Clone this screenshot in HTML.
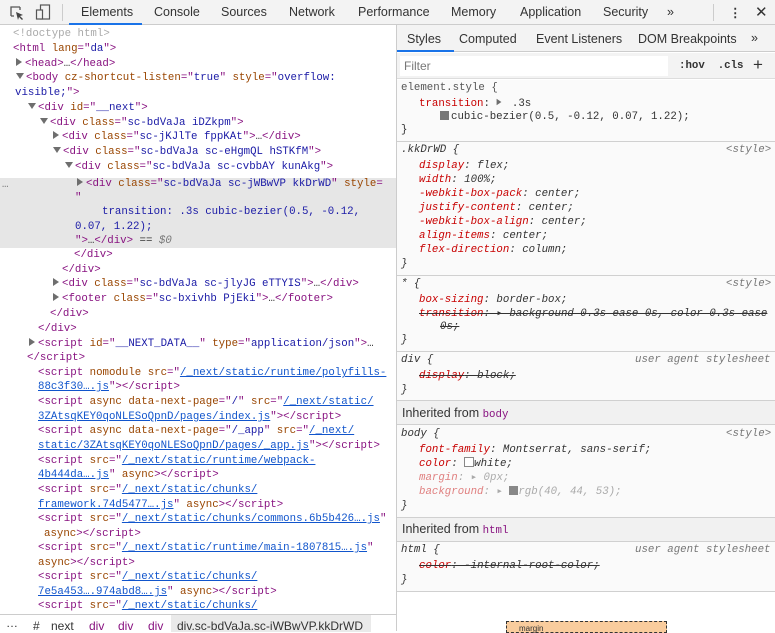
<!DOCTYPE html>
<html><head><meta charset="utf-8"><style>
*{margin:0;padding:0;box-sizing:border-box}
body{width:775px;height:631px;overflow:hidden;background:#fff;position:relative;font-family:"Liberation Sans",sans-serif;color:#333}
.m{font-family:"Liberation Mono","DejaVu Sans Mono",monospace;font-size:10.75px;white-space:pre;position:absolute;line-height:14px}
.t{color:#881280}.a{color:#994500}.v{color:#1a1aa6}.g{color:#aaa}.u{color:#1155cc;text-decoration:underline}
.tri{display:inline-block;width:0;height:0;border-left:6px solid #6e6e6e;border-top:4px solid transparent;border-bottom:4px solid transparent;margin-right:3px;vertical-align:0}
.dn{display:inline-block;width:0;height:0;border-top:6px solid #6e6e6e;border-left:4px solid transparent;border-right:4px solid transparent;margin-right:2px;vertical-align:1px}
.top{position:absolute;left:0;top:0;width:775px;height:25px;background:#f3f3f3;border-bottom:1px solid #ccc}
.tab{position:absolute;top:5px;font-size:12.5px;color:#333}
.p{color:#c80000}.i{font-style:italic}.s{text-decoration:line-through}
.sep{position:absolute;left:397px;width:378px;height:1px;background:#d0d0d0}
.r{position:absolute;left:397px;width:378px;background:#fafafa}
</style></head><body>
<div class="top">
<svg style="position:absolute;left:9px;top:5px" width="16" height="16" viewBox="0 0 16 16"><path d="M2 11V2h9" fill="none" stroke="#555" stroke-width="1.3"/><path d="M2 11h3M11 2v3" stroke="#555" stroke-width="1.3"/><path d="M7 7l7 3-3 1 3 3-1 1-3-3-1 3z" fill="#444"/></svg>
<svg style="position:absolute;left:35px;top:4px" width="16" height="17" viewBox="0 0 16 17"><rect x="5.5" y="1" width="9" height="14" fill="none" stroke="#555" stroke-width="1.2"/><rect x="1.5" y="6" width="6" height="9" fill="#f3f3f3" stroke="#555" stroke-width="1.2"/></svg>
<div style="position:absolute;left:62px;top:4px;width:1px;height:17px;background:#ccc"></div>
<div class="tab" style="left:81px;color:#333">Elements</div>
<div style="position:absolute;left:69px;top:23px;width:73px;height:2px;background:#1a73e8"></div>
<div class="tab" style="left:154px">Console</div>
<div class="tab" style="left:221px">Sources</div>
<div class="tab" style="left:289px">Network</div>
<div class="tab" style="left:358px">Performance</div>
<div class="tab" style="left:451px">Memory</div>
<div class="tab" style="left:520px">Application</div>
<div class="tab" style="left:603px">Security</div>
<div class="tab" style="left:667px">»</div>
<div style="position:absolute;left:713px;top:4px;width:1px;height:17px;background:#ccc"></div>
<div class="tab" style="left:729px;font-weight:bold">⋮</div>
<div class="tab" style="left:755px;font-size:15px;top:3px">✕</div>
</div>

<!-- elements -->
<div style="position:absolute;left:0;top:178px;width:396px;height:70px;background:#e6e6e6"></div>
<div class="m" style="left:2px;top:178px;color:#777">…</div>
<div class="m g" style="left:13px;top:27px">&lt;!doctype html&gt;</div>
<div class="m" style="left:13px;top:42px"><span class="t">&lt;html</span> <span class="a">lang</span><span class="t">="</span><span class="v">da</span><span class="t">"&gt;</span></div>
<div class="m" style="left:16px;top:57px"><span class="tri"></span><span class="t">&lt;head&gt;</span>…<span class="t">&lt;/head&gt;</span></div>
<div class="m" style="left:16px;top:71px"><span class="dn"></span><span class="t">&lt;body</span> <span class="a">cz-shortcut-listen</span><span class="t">="</span><span class="v">true</span><span class="t">"</span> <span class="a">style</span><span class="t">="</span><span class="v">overflow:</span></div>
<div class="m" style="left:15px;top:86px"><span class="v">visible;</span><span class="t">"&gt;</span></div>
<div class="m" style="left:28px;top:101px"><span class="dn"></span><span class="t">&lt;div</span> <span class="a">id</span><span class="t">="</span><span class="v">__next</span><span class="t">"&gt;</span></div>
<div class="m" style="left:40px;top:116px"><span class="dn"></span><span class="t">&lt;div</span> <span class="a">class</span><span class="t">="</span><span class="v">sc-bdVaJa iDZkpm</span><span class="t">"&gt;</span></div>
<div class="m" style="left:53px;top:130px"><span class="tri"></span><span class="t">&lt;div</span> <span class="a">class</span><span class="t">="</span><span class="v">sc-jKJlTe fppKAt</span><span class="t">"&gt;</span>…<span class="t">&lt;/div&gt;</span></div>
<div class="m" style="left:53px;top:145px"><span class="dn"></span><span class="t">&lt;div</span> <span class="a">class</span><span class="t">="</span><span class="v">sc-bdVaJa sc-eHgmQL hSTKfM</span><span class="t">"&gt;</span></div>
<div class="m" style="left:65px;top:160px"><span class="dn"></span><span class="t">&lt;div</span> <span class="a">class</span><span class="t">="</span><span class="v">sc-bdVaJa sc-cvbbAY kunAkg</span><span class="t">"&gt;</span></div>
<div class="m" style="left:77px;top:177px"><span class="tri"></span><span class="t">&lt;div</span> <span class="a">class</span><span class="t">="</span><span class="v">sc-bdVaJa sc-jWBwVP kkDrWD</span><span class="t">"</span> <span class="a">style</span><span class="t">=</span></div>
<div class="m" style="left:75px;top:191px"><span class="t">"</span></div>
<div class="m v" style="left:102px;top:205px">transition: .3s cubic-bezier(0.5, -0.12,</div>
<div class="m v" style="left:75px;top:220px">0.07, 1.22);</div>
<div class="m" style="left:75px;top:234px"><span class="t">"&gt;</span>…<span class="t">&lt;/div&gt;</span> == <span class="i" style="color:#777">$0</span></div>
<div class="m t" style="left:74px;top:248px">&lt;/div&gt;</div>
<div class="m t" style="left:62px;top:263px">&lt;/div&gt;</div>
<div class="m" style="left:53px;top:277px"><span class="tri"></span><span class="t">&lt;div</span> <span class="a">class</span><span class="t">="</span><span class="v">sc-bdVaJa sc-jlyJG eTTYIS</span><span class="t">"&gt;</span>…<span class="t">&lt;/div&gt;</span></div>
<div class="m" style="left:53px;top:292px"><span class="tri"></span><span class="t">&lt;footer</span> <span class="a">class</span><span class="t">="</span><span class="v">sc-bxivhb PjEki</span><span class="t">"&gt;</span>…<span class="t">&lt;/footer&gt;</span></div>
<div class="m t" style="left:50px;top:307px">&lt;/div&gt;</div>
<div class="m t" style="left:38px;top:322px">&lt;/div&gt;</div>
<div class="m" style="left:29px;top:337px"><span class="tri"></span><span class="t">&lt;script</span> <span class="a">id</span><span class="t">="</span><span class="v">__NEXT_DATA__</span><span class="t">"</span> <span class="a">type</span><span class="t">="</span><span class="v">application/json</span><span class="t">"&gt;</span>…</div>
<div class="m t" style="left:27px;top:351px">&lt;/script&gt;</div>
<div class="m" style="left:38px;top:366px"><span class="t">&lt;script</span> <span class="a">nomodule</span> <span class="a">src</span><span class="t">="</span><span class="u">/_next/static/runtime/polyfills-</span></div>
<div class="m" style="left:38px;top:380px"><span class="u">88c3f30….js</span><span class="t">"&gt;&lt;/script&gt;</span></div>
<div class="m" style="left:38px;top:395px"><span class="t">&lt;script</span> <span class="a">async</span> <span class="a">data-next-page</span><span class="t">="</span><span class="v">/</span><span class="t">"</span> <span class="a">src</span><span class="t">="</span><span class="u">/_next/static/</span></div>
<div class="m" style="left:38px;top:410px"><span class="u">3ZAtsqKEY0qoNLESoQpnD/pages/index.js</span><span class="t">"&gt;&lt;/script&gt;</span></div>
<div class="m" style="left:38px;top:424px"><span class="t">&lt;script</span> <span class="a">async</span> <span class="a">data-next-page</span><span class="t">="</span><span class="v">/_app</span><span class="t">"</span> <span class="a">src</span><span class="t">="</span><span class="u">/_next/</span></div>
<div class="m" style="left:38px;top:439px"><span class="u">static/3ZAtsqKEY0qoNLESoQpnD/pages/_app.js</span><span class="t">"&gt;&lt;/script&gt;</span></div>
<div class="m" style="left:38px;top:454px"><span class="t">&lt;script</span> <span class="a">src</span><span class="t">="</span><span class="u">/_next/static/runtime/webpack-</span></div>
<div class="m" style="left:38px;top:468px"><span class="u">4b444da….js</span><span class="t">"</span> <span class="a">async</span><span class="t">&gt;&lt;/script&gt;</span></div>
<div class="m" style="left:38px;top:483px"><span class="t">&lt;script</span> <span class="a">src</span><span class="t">="</span><span class="u">/_next/static/chunks/</span></div>
<div class="m" style="left:38px;top:498px"><span class="u">framework.74d5477….js</span><span class="t">"</span> <span class="a">async</span><span class="t">&gt;&lt;/script&gt;</span></div>
<div class="m" style="left:38px;top:512px"><span class="t">&lt;script</span> <span class="a">src</span><span class="t">="</span><span class="u">/_next/static/chunks/commons.6b5b426….js</span><span class="t">"</span></div>
<div class="m" style="left:44px;top:527px"><span class="a">async</span><span class="t">&gt;&lt;/script&gt;</span></div>
<div class="m" style="left:38px;top:541px"><span class="t">&lt;script</span> <span class="a">src</span><span class="t">="</span><span class="u">/_next/static/runtime/main-1807815….js</span><span class="t">"</span></div>
<div class="m" style="left:38px;top:556px"><span class="a">async</span><span class="t">&gt;&lt;/script&gt;</span></div>
<div class="m" style="left:38px;top:570px"><span class="t">&lt;script</span> <span class="a">src</span><span class="t">="</span><span class="u">/_next/static/chunks/</span></div>
<div class="m" style="left:38px;top:585px"><span class="u">7e5a453….974abd8….js</span><span class="t">"</span> <span class="a">async</span><span class="t">&gt;&lt;/script&gt;</span></div>
<div class="m" style="left:38px;top:599px"><span class="t">&lt;script</span> <span class="a">src</span><span class="t">="</span><span class="u">/_next/static/chunks/</span></div>
<!-- breadcrumb -->
<div style="position:absolute;left:0;top:614px;width:396px;height:17px;background:#fff;border-top:1px solid #ccc;font-size:12px;white-space:pre">
<span style="position:absolute;left:6px;top:1px">…</span>
<span style="position:absolute;left:33px;top:4px">#</span>
<span style="position:absolute;left:51px;top:4px">next</span>
<span style="position:absolute;left:89px;top:4px;color:#881280">div</span>
<span style="position:absolute;left:118px;top:4px;color:#881280">div</span>
<span style="position:absolute;left:148px;top:4px;color:#881280">div</span>
<span style="position:absolute;left:171px;top:0;height:17px;width:200px;background:#eaeaea;padding:4px 6px 0">div.sc-bdVaJa.sc-iWBwVP.kkDrWD</span>
</div>
<div style="position:absolute;left:396px;top:25px;width:1px;height:606px;background:#ccc"></div>

<!-- styles pane -->
<div style="position:absolute;left:397px;top:25px;width:378px;height:27px;background:#f3f3f3;border-bottom:1px solid #ccc"></div>
<div class="tab" style="left:407px;top:32px">Styles</div>
<div style="position:absolute;left:397px;top:50px;width:57px;height:2px;background:#1a73e8"></div>
<div class="tab" style="left:459px;top:32px">Computed</div>
<div class="tab" style="left:536px;top:32px">Event Listeners</div>
<div class="tab" style="left:638px;top:32px">DOM Breakpoints</div>
<div class="tab" style="left:751px;top:31px">»</div>
<div style="position:absolute;left:397px;top:53px;width:378px;height:26px;background:#f3f3f3;border-bottom:1px solid #ddd"></div>
<div style="position:absolute;left:400px;top:56px;width:268px;height:20px;background:#fff"></div>
<div class="tab" style="left:404px;top:59px;color:#777;font-size:12px">Filter</div>
<div class="m" style="left:679px;top:59px;font-weight:bold;color:#333">:hov  .cls</div>
<div class="tab" style="left:753px;top:55px;font-size:17px">+</div>
<div class="r" style="top:80px;height:550px"></div>

<div class="m" style="left:401px;top:81px;color:#555">element.style {</div>
<div class="m" style="left:419px;top:97px"><span class="p">transition</span>: <span class="tri" style="transform:scale(.8)"></span> .3s</div>
<div class="m" style="left:440px;top:110px"><span style="display:inline-block;width:9px;height:9px;background:#777;vertical-align:-1px;margin-right:2px"></span>cubic-bezier(0.5, -0.12, 0.07, 1.22);</div>
<div class="m" style="left:401px;top:123px">}</div>
<div class="sep" style="top:141px"></div>

<div class="m i" style="left:401px;top:143px">.kkDrWD {</div><div class="m i" style="left:726px;top:143px;color:#777">&lt;style&gt;</div>
<div class="m i" style="left:419px;top:159px"><span class="p">display</span>: flex;</div>
<div class="m i" style="left:419px;top:173px"><span class="p">width</span>: 100%;</div>
<div class="m i" style="left:419px;top:187px"><span class="p">-webkit-box-pack</span>: center;</div>
<div class="m i" style="left:419px;top:201px"><span class="p">justify-content</span>: center;</div>
<div class="m i" style="left:419px;top:215px"><span class="p">-webkit-box-align</span>: center;</div>
<div class="m i" style="left:419px;top:229px"><span class="p">align-items</span>: center;</div>
<div class="m i" style="left:419px;top:243px"><span class="p">flex-direction</span>: column;</div>
<div class="m i" style="left:401px;top:257px">}</div>
<div class="sep" style="top:275px"></div>

<div class="m i" style="left:401px;top:277px">* {</div><div class="m i" style="left:726px;top:277px;color:#777">&lt;style&gt;</div>
<div class="m i" style="left:419px;top:293px"><span class="p">box-sizing</span>: border-box;</div>
<div class="m i s" style="left:419px;top:307px"><span class="p">transition</span>: ▸ background 0.3s ease 0s, color 0.3s ease</div>
<div class="m i s" style="left:440px;top:320px">0s;</div>
<div class="m i" style="left:401px;top:333px">}</div>
<div class="sep" style="top:351px"></div>

<div class="m i" style="left:401px;top:353px">div {</div><div class="m i" style="left:635px;top:353px;color:#777">user agent stylesheet</div>
<div class="m i s" style="left:419px;top:369px"><span class="p">display</span>: block;</div>
<div class="m i" style="left:401px;top:383px">}</div>
<div class="sep" style="top:400px"></div>
<div style="position:absolute;left:397px;top:401px;width:378px;height:24px;background:#f1f1f1;border-bottom:1px solid #d0d0d0"></div>
<div class="tab" style="left:402px;top:406px">Inherited from <span class="m" style="position:static;color:#881280">body</span></div>

<div class="m i" style="left:401px;top:427px">body {</div><div class="m i" style="left:726px;top:427px;color:#777">&lt;style&gt;</div>
<div class="m i" style="left:419px;top:443px"><span class="p">font-family</span>: Montserrat, sans-serif;</div>
<div class="m i" style="left:419px;top:457px"><span class="p">color</span>: <span style="display:inline-block;width:10px;height:10px;border:1px solid #888;background:#fff;vertical-align:-1px"></span>white;</div>
<div class="m i" style="left:419px;top:471px;color:#aaa"><span style="color:#e08080">margin</span>: ▸ 0px;</div>
<div class="m i" style="left:419px;top:485px;color:#aaa"><span style="color:#e08080">background</span>: ▸ <span style="display:inline-block;width:9px;height:9px;background:#888;vertical-align:-1px"></span>rgb(40, 44, 53);</div>
<div class="m i" style="left:401px;top:499px">}</div>
<div class="sep" style="top:517px"></div>
<div style="position:absolute;left:397px;top:518px;width:378px;height:24px;background:#f1f1f1;border-bottom:1px solid #d0d0d0"></div>
<div class="tab" style="left:402px;top:522px">Inherited from <span class="m" style="position:static;color:#881280">html</span></div>

<div class="m i" style="left:401px;top:543px">html {</div><div class="m i" style="left:635px;top:543px;color:#777">user agent stylesheet</div>
<div class="m i s" style="left:419px;top:559px"><span class="p">color</span>: -internal-root-color;</div>
<div class="m i" style="left:401px;top:573px">}</div>
<div class="sep" style="top:591px"></div>
<div style="position:absolute;left:397px;top:592px;width:378px;height:39px;background:#fff"></div>
<div style="position:absolute;left:506px;top:621px;width:161px;height:12px;background:#f9cc9d;border:1px dashed #333;font-size:8px;padding:2px 12px">margin</div>
</body></html>
